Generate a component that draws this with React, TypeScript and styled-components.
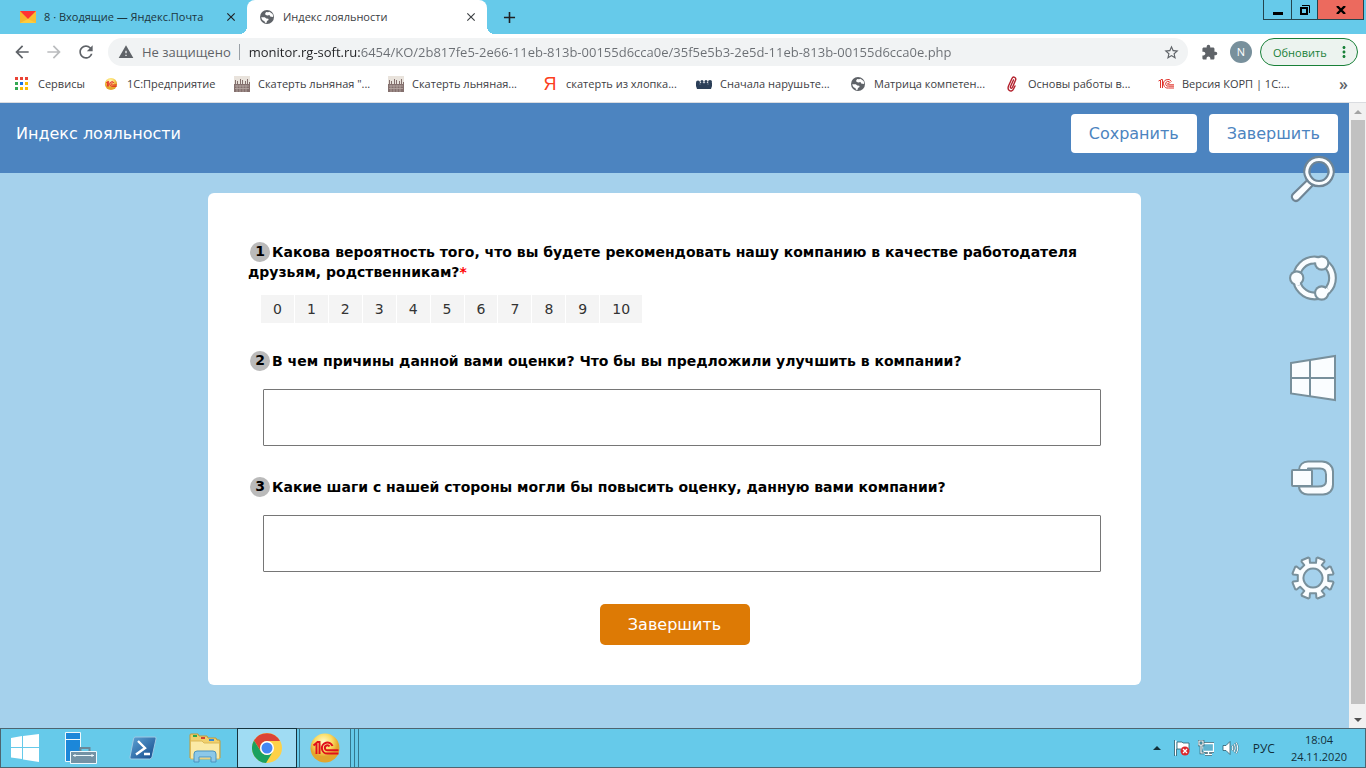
import React from 'react';
import styled, { createGlobalStyle } from 'styled-components';
import { MdClose, MdAdd, MdArrowBack, MdArrowForward, MdRefresh, MdWarning, MdStarBorder, MdExtension, MdMoreVert } from 'react-icons/md';

const UI = '"Open Sans", "Noto Sans", sans-serif';
const BODY = '"DejaVu Sans", Verdana, sans-serif';
const SKY = '#66caea';

const GlobalStyle = createGlobalStyle`
  * { box-sizing: border-box; }
  body { margin: 0; font-family: ${UI}; }
  button, input, textarea { font-family: inherit; margin: 0; }
  button { padding: 0; border: 0; background: none; cursor: pointer; color: inherit; }
  a { color: inherit; text-decoration: none; }
  svg { display: block; flex: none; }
`;

const Desktop = styled.div`
  position: relative;
  display: flex;
  flex-direction: column;
  min-height: 100vh;
`;

/* ---------- Browser chrome ---------- */

const TabStrip = styled.div`
  display: flex;
  align-items: stretch;
  height: 34px;
  background: ${SKY};
  overflow: hidden;
`;

const Tab = styled.div<{ $active?: boolean }>`
  position: relative;
  display: flex;
  align-items: center;
  gap: 8px;
  width: ${p => (p.$active ? 240 : 247)}px;
  padding: 0 8px 0 ${p => (p.$active ? 12 : 20)}px;
  border-radius: 8px 8px 0 0;
  background: ${p => (p.$active ? '#fff' : 'transparent')};
  color: ${p => (p.$active ? '#3c4043' : '#1b353e')};
  ${p => p.$active && `
    &::before, &::after {
      content: '';
      position: absolute;
      bottom: 0;
      width: 8px;
      height: 8px;
    }
    &::before { left: -8px; background: radial-gradient(circle at 0 0, transparent 8px, #fff 8px); }
    &::after { right: -8px; background: radial-gradient(circle at 100% 0, transparent 8px, #fff 8px); }
  `}
`;

const TabTitle = styled.button`
  flex: 1;
  min-width: 0;
  font-size: 11px;
  line-height: 16px;
  text-align: left;
  white-space: nowrap;
`;

const IconButton = styled.button<{ $size?: number; $color?: string }>`
  display: flex;
  align-items: center;
  justify-content: center;
  flex: none;
  width: ${p => p.$size ?? 16}px;
  height: ${p => p.$size ?? 16}px;
  color: ${p => p.$color ?? '#202124'};
`;

const NewTab = styled(IconButton)`
  align-self: center;
  margin-left: 8px;
`;

const WindowButtons = styled.div`
  display: flex;
  align-self: flex-start;
  margin: 0 2px 0 auto;
  height: 20px;
  border: solid #23454f;
  border-width: 0 1px 1px;
`;

const WindowButton = styled.button<{ $width: number; $close?: boolean }>`
  display: flex;
  align-items: center;
  justify-content: center;
  width: ${p => p.$width}px;
  background: ${p => (p.$close ? '#ec6a5e' : 'transparent')};
  & + & { border-left: 1px solid #23454f; }
`;

const Toolbar = styled.div`
  display: flex;
  align-items: center;
  height: 36px;
  padding: 0 8px 0 6px;
  background: #fff;
`;

const Omnibox = styled.form`
  display: flex;
  align-items: center;
  flex: 1;
  min-width: 0;
  height: 28px;
  margin: 0 6px 0 6px;
  padding: 0 9px 0 10px;
  border-radius: 14px;
  background: #f1f3f4;
`;

const Security = styled.button`
  display: flex;
  align-items: center;
  gap: 8px;
  flex: none;
  height: 16px;
  padding-right: 8px;
  border-right: 1px solid #9aa0a6;
  color: #5f6368;
  font-size: 13px;
  line-height: 16px;
`;

const Address = styled.input`
  flex: 1;
  min-width: 0;
  height: 24px;
  padding: 0 0 0 9px;
  border: 0;
  outline: 0;
  font-size: 13px;
  color: #5f6368;
  background: linear-gradient(90deg, #202124 121px, #6a6e73 121px);
  background-clip: text;
  -webkit-background-clip: text;
  -webkit-text-fill-color: transparent;
`;

const Avatar = styled.button`
  width: 22px;
  height: 22px;
  margin: 0 8px 0 6px;
  border-radius: 50%;
  background: #78909c;
  color: #fff;
  font-size: 11px;
  line-height: 22px;
`;

const UpdateButton = styled.button`
  display: flex;
  align-items: center;
  justify-content: space-between;
  width: 98px;
  height: 28px;
  padding: 0 4px 0 12px;
  border: 1px solid #188038;
  border-radius: 14px;
  background: #ecf3ef;
  color: #188038;
  font-size: 11px;
`;

const Bookmarks = styled.nav`
  display: flex;
  align-items: center;
  height: 33px;
  padding: 0 18px 4px 14px;
  border-bottom: 1px solid #dadce0;
  background: #fff;
`;

const Bookmark = styled.a<{ $width: number }>`
  display: flex;
  align-items: center;
  gap: 8px;
  flex: none;
  width: ${p => p.$width}px;
  color: #3c4043;
  font-size: 11px;
  line-height: 16px;
  white-space: nowrap;
`;

const YandexMark = styled.span`
  width: 16px;
  color: #fc3f1d;
  font: 18px/16px "Liberation Sans", sans-serif;
  text-align: center;
`;

const MoreBookmarks = styled.button`
  margin-left: auto;
  color: #5f6368;
  font-size: 16px;
  font-weight: 600;
  line-height: 16px;
`;

/* ---------- Page ---------- */

const Viewport = styled.div`
  display: flex;
  flex: 1;
`;

const Page = styled.main`
  flex: 1;
  min-width: 0;
  background: #a5d1ec;
  font-family: ${BODY};
`;

const Header = styled.header`
  display: flex;
  align-items: flex-start;
  gap: 12px;
  height: 70px;
  padding: 11px 11px 0 16px;
  background: #4c84c0;
`;

const Title = styled.h1`
  flex: 1;
  margin: 10px 0 0;
  color: #fff;
  font-size: 16px;
  font-weight: 400;
  line-height: 20px;
`;

const HeaderButton = styled.button`
  height: 39px;
  padding: 0 18px;
  border-radius: 4px;
  background: #fff;
  color: #4c84c0;
  font-size: 16px;
`;

const Card = styled.form`
  display: flex;
  flex-direction: column;
  max-width: 933px;
  margin: 20px auto 43px;
  padding: 49px 40px 40px;
  border-radius: 6px;
  background: #fff;
`;

const Question = styled.fieldset`
  min-width: 0;
  margin: 0 0 28px;
  padding: 0;
  border: 0;
`;

const OpenQuestion = styled.div`
  margin-bottom: 31px;
`;

const questionText = `
  display: block;
  padding: 0;
  color: #000;
  font-size: 14px;
  font-weight: 700;
  line-height: 20px;
`;

const Legend = styled.legend`${questionText}`;
const Label = styled.label`${questionText}`;

const Badge = styled.span`
  display: inline-block;
  width: 20px;
  height: 20px;
  margin: 0 2px;
  border-radius: 50%;
  background: #bababa;
  line-height: 18px;
  text-align: center;
  vertical-align: top;
`;

const Required = styled.span`
  color: #f00;
`;

const Scale = styled.div`
  display: flex;
  gap: 1px;
  margin: 13px 0 0 13px;
`;

const ScaleItem = styled.label`
  position: relative;
  padding: 0 12px;
  background: #f4f4f4;
  color: #333;
  font-size: 14px;
  line-height: 28px;
  cursor: pointer;
  &:has(:checked) { background: #bababa; }
`;

const ScaleRadio = styled.input`
  position: absolute;
  inset: 0;
  width: 100%;
  height: 100%;
  margin: 0;
  opacity: 0;
`;

const Answer = styled.textarea`
  display: block;
  width: calc(100% - 15px);
  height: 57px;
  margin: 18px 0 0 15px;
  border: 1px solid #767676;
  border-radius: 1px;
  resize: none;
  font-size: 14px;
`;

const Submit = styled.button`
  align-self: center;
  width: 150px;
  height: 41px;
  margin-top: 1px;
  border-radius: 5px;
  background: #dd7a05;
  color: #fff;
  font-size: 16px;
`;

const Scrollbar = styled.div`
  display: flex;
  flex-direction: column;
  width: 17px;
  padding: 0 1px 0 2px;
  background: #f1f1f1;
`;

const ScrollArrow = styled.button`
  display: flex;
  align-items: center;
  justify-content: center;
  height: 17px;
`;

const ScrollTrack = styled.div`
  flex: 1;
  padding-bottom: 7px;
`;

const ScrollThumb = styled.div`
  height: 100%;
  background: #c1c1c1;
`;

/* ---------- Charms, floating over the page ---------- */

const Charms = styled.div`
  position: absolute;
  top: 154px;
  right: 28px;
  display: flex;
  flex-direction: column;
  gap: 50px;
`;

/* ---------- Taskbar ---------- */

const Taskbar = styled.footer`
  display: flex;
  height: 40px;
  border: 1px solid #4d6570;
  background: ${SKY};
`;

const Task = styled.button<{ $width: number; $state?: 'active' | 'running' }>`
  display: flex;
  align-items: center;
  justify-content: center;
  width: ${p => p.$width}px;
  ${p => p.$state === 'active' && 'background: #a0dcf3; border: 1px solid #17333d; margin: -1px 0;'}
  ${p => p.$state === 'running' && 'background: #7ed0ec; border: solid #34788f; border-width: 0 1px; margin-left: 2px;'}
`;

const StackEdge = styled.div`
  width: 4px;
  border-right: 1px solid #34788f;
`;

const Tray = styled.div`
  display: flex;
  align-items: center;
  gap: 8px;
  margin-left: auto;
  padding-right: 18px;
  color: #12303a;
  font-size: 11px;
  line-height: 17px;
`;

const TrayExpand = styled(IconButton)`
  width: 8px;
  margin-right: 5px;
`;

const Language = styled.button`
  margin: 0 8px 0 6px;
  font-size: 12px;
`;

const Clock = styled.time`
  text-align: center;
`;

/* ---------- Drawings ---------- */

const Globe = () => (
  <svg width="16" height="16" viewBox="0 0 16 16">
    <circle cx="8" cy="8" r="7" fill="#5f6368" />
    <path d="M10.500 2.700 9 3.200 7.300 3 6.200 4.200l.2 1.600 1.800.6 2.300-.3.700 1.400 2.500.4.500-.6-.6-2.300z" fill="#fff" />
    <path d="M2.200 8.200l3.600.1 1.500 1.300 2 .2.300 1.300-1.600.9-.6 1.900-1.300-.1-.8-1.700-1.400-.7-1-1.200z" fill="#fff" />
  </svg>
);

const Mail = () => (
  <svg width="16" height="12" viewBox="0 0 16 12">
    <path d="M0 0h16v12H0z" fill="#ffcc3d" />
    <path d="m0 0 8 8-8 4z" fill="#f5b52e" />
    <path d="M16 0 8 8l8 4z" fill="#f9bd33" />
    <path d="M0 0h16L8 8z" fill="#f33" />
  </svg>
);

const Apps = () => {
  const colors = ['#ea4335', '#ea4335', '#ea4335', '#34a853', '#1a73e8', '#fbbc04', '#34a853', '#fbbc04', '#fbbc04'];
  return (
    <svg width="16" height="16" viewBox="0 0 16 16">
      {colors.map((c, i) => <rect key={i} x={1 + (i % 3) * 5} y={1 + Math.floor(i / 3) * 5} width="3" height="3" fill={c} />)}
    </svg>
  );
};

const OneC = ({ size, pad = 0 }: { size: number; pad?: number }) => (
  <svg width={size} height={size} viewBox={`${-pad} ${-pad} ${32 + 2 * pad} ${32 + 2 * pad}`}>
    <defs>
      <radialGradient id="gold" cx="45%" cy="30%">
        <stop offset="0" stopColor="#fffbd0" />
        <stop offset=".6" stopColor="#fbdc62" />
        <stop offset="1" stopColor="#e3a52c" />
      </radialGradient>
    </defs>
    <circle cx="16" cy="16" r="14.500" fill="url(#gold)" />
    <g fill="none" stroke="#e0101b" strokeWidth="2">
      <path d="M4.500 13.500 7.500 11v11M10.500 22V10H8" />
      <path d="M23.500 14A5.500 5.500 0 1 0 18.500 21.500h11M20.500 14.500A2.500 2.500 0 1 0 18.500 18.300h11" />
    </g>
  </svg>
);

const OneCFlat = () => (
  <svg width="16" height="16" viewBox="0 0 16 16" fill="none" stroke="#e0342c" strokeWidth="1">
    <path d="M.5 5 2.500 4v8M4.500 12V3.500H3M13.500 5.500A4.300 4.300 0 1 0 10.500 12H16M12.300 7A2.400 2.400 0 1 0 10.500 10.200H16M11.200 8a.8.8 0 1 0-.7 .8H16" />
  </svg>
);

const Skyline = () => (
  <svg width="16" height="16" viewBox="0 0 16 16">
    <path d="M0 0h16v16H0z" fill="#e9e3dc" />
    <path d="M0 8h1V4h1v4h1V5h1v3h2V3h1v5h1V4h1v4h2V5h1v3h1V3h1v5h1V6h1v10H0z" fill="#84706e" />
    <path d="M1 10h14M1 12.500h14M3 9v7M6 9v7M9 9v7M12 9v7" stroke="#b8a9a5" strokeWidth=".8" />
  </svg>
);

const Crowd = () => (
  <svg width="16" height="16" viewBox="0 0 16 16" fill="#2b3f58">
    <path d="M0 7h16v3l-1 3H1l-1-3z" />
    <circle cx="2" cy="6.500" r="2" /><circle cx="6" cy="5.500" r="1.500" /><circle cx="10" cy="5.500" r="1.500" /><circle cx="14" cy="6" r="2" />
    <path d="M4 7v2M8 6v2M12 7v2" stroke="#8494a8" strokeWidth=".6" />
  </svg>
);

const Clip = () => (
  <svg width="16" height="16" viewBox="0 0 16 16" fill="none" stroke="#b3202c" strokeWidth="1.400" strokeLinecap="round">
    <path d="m9.500 4-3 6.500c-.6 1.700 1.300 2.300 2 .8l3-7c1.200-3-2.300-4.500-3.700-1.600L4.500 10c-1.700 4.500 3 7 5 3l1.500-3" />
  </svg>
);

const charm = { width: 50, height: 50, viewBox: '0 0 50 50', fill: '#fafdff', stroke: '#78909c', strokeWidth: 2.2, strokeLinejoin: 'round' as const };

const SearchCharm = () => (
  <svg {...charm} stroke="#6f8595">
    <path d="M21.500 24 5 40c-3.500 3.800 2 9.500 6 5.500L27 29z" />
    <path fillRule="evenodd" d="M31 2.800a14.700 14.700 0 1 0 .01 0zm0 5.200a9.500 9.500 0 1 1-.01 0z" />
  </svg>
);

const shareNodes = [[33.7, 9], [8.7, 24], [33.7, 39]];

const ShareCharm = () => (
  <svg {...charm} fill="none" stroke="#fafdff" strokeWidth={4.6} strokeLinejoin="round">
    <circle cx="26.500" cy="24" r="18" stroke="#78909c" strokeWidth="8.800" />
    <circle cx="26.500" cy="24" r="18" />
    {shareNodes.map(([x, y]) => <circle key={`${x}-${y}`} cx={x} cy={y} r="7.700" fill="#78909c" stroke="none" />)}
    {shareNodes.map(([x, y]) => <circle key={`${x}-${y}`} cx={x} cy={y} r="5.600" fill="#fafdff" stroke="none" />)}
    <path d="M33 7.500A18 18 0 0 0 23 6.300M8.500 24A18 18 0 0 0 10.200 31.500M34 40.300A18 18 0 0 0 40.500 35.300" />
  </svg>
);

const StartCharm = () => (
  <svg {...charm} strokeWidth={2} strokeLinejoin="miter">
    <path d="M3 9 47 2v44L3 39.500z" />
    <path d="M22 6v36M3 24h44" />
  </svg>
);

const DevicesCharm = () => (
  <svg {...charm} viewBox="0 1 50 50" strokeWidth={2}>
    <path d="M11 17c0-5 4-8.500 9-8.500h14c6 0 11 4.500 11 10v13c0 6-4 10-10 10H20c-5 0-9-3-9-8h19c5 0 8-1 8-5v-7c0-4-2-6-6-6H20v2z" />
    <rect x="4" y="17" width="20" height="16" rx="1" />
  </svg>
);

const gearPath = (() => {
  const points: string[] = [];
  for (let i = 0; i < 8; i++) {
    const mid = (i * 45 + 22.5) * Math.PI / 180;
    [[-0.2, 15.5], [-0.22, 20], [-0.17, 21], [0.17, 21], [0.22, 20], [0.2, 15.5]].forEach(([da, r]) => {
      points.push(`${(25 + r * Math.cos(mid + da)).toFixed(1)} ${(25 + r * Math.sin(mid + da)).toFixed(1)}`);
    });
  }
  return `M${points.join('L')}ZM25 15.500a9.500 9.500 0 1 0 .01 0z`;
})();

const SettingsCharm = () => (
  <svg {...charm} viewBox="0 1 50 50" strokeWidth={2}><path fillRule="evenodd" d={gearPath} /></svg>
);

const StartIcon = () => (
  <svg width="28" height="28" viewBox="0 0 28 28" fill="#fff">
    <path d="m0 4 11-2v11H0zM12 2l16-2v13H12zM0 14h11v11L0 23.500zM12 14h16v14l-16-2.500z" />
  </svg>
);

const ServerIcon = () => (
  <svg width="32" height="32" viewBox="0 0 32 32" stroke="#eef8fc" strokeWidth="1">
    <path d="M.5.500h15v29h-15z" fill="#1c87d9" />
    <path d="M.5 7.500h15" />
    <path d="M15.500 19v-3h9v3" fill="none" stroke="#6a8798" strokeWidth="2" />
    <path d="M5.500 19.500h26v12h-26z" fill="#7492a5" />
    <path d="M8 23.500h21M10 22v3M27 22v3" />
  </svg>
);

const ShellIcon = () => (
  <svg width="28" height="24" viewBox="0 0 28 24">
    <defs><linearGradient id="ps" x2="1" y2="1"><stop stopColor="#5fa4d6" /><stop offset="1" stopColor="#12488a" /></linearGradient></defs>
    <path d="M6 1h20q1.500 0 1 2l-4 18q-.5 2-2.500 2H2q-1.500 0-1-2L4.500 3Q5 1 6 1z" fill="url(#ps)" stroke="#9fc9e4" />
    <path d="m9 5 7 7-9 6.500M15 18h6" fill="none" stroke="#fff" strokeWidth="2.400" />
  </svg>
);

const FolderIcon = () => (
  <svg width="32" height="30" viewBox="0 0 32 30">
    <path d="M1 2q0-1 1-1h7l1 2h8l1 2h8l1 2h2q1 0 1 1v17H1z" fill="#f0d06d" stroke="#c39a36" />
    <path d="M4 2h4v2H4z" fill="#2ba84a" /><path d="M12 4h4v2h-4z" fill="#d3432f" /><path d="M20 6h5v2h-5z" fill="#3389d6" />
    <path d="M1.500 8H13l2 2h15.500v15q0 1-1 1h-27q-1 0-1-1z" fill="#fbeaa6" stroke="#dcb958" />
    <path d="M5 29v-8q0-3 3-3h16q3 0 3 3v8h-5v-5H10v5z" fill="#8cc8e8" stroke="#4a93bf" />
  </svg>
);

const ChromeIcon = () => (
  <svg width="30" height="30" viewBox="0 0 30 30">
    <circle cx="15" cy="15" r="15" fill="#fdd148" />
    <path d="M2 7.500A15 15 0 0 1 28 8H15a7 7 0 0 0-6 10.500z" fill="#dc4436" />
    <path d="M2 7.500A15 15 0 0 0 14 30l7-11.500a7 7 0 0 1-12.100 0z" fill="#1aa15f" />
    <circle cx="15" cy="15" r="7" fill="#fff" /><circle cx="15" cy="15" r="5.500" fill="#4587f3" />
  </svg>
);

const FlagIcon = () => (
  <svg width="16" height="16" viewBox="0 0 16 16">
    <path d="M1.500.500v15" stroke="#fff" strokeWidth="2" />
    <path d="M.5 0v16M2.500 9v7" stroke="#2b5b6b" strokeWidth=".8" />
    <path d="M3 2h5l1 1h6v7H8L7 9H3z" fill="#fff" stroke="#2b5b6b" strokeWidth=".8" />
    <circle cx="11" cy="11" r="4.500" fill="#dc2a2e" />
    <path d="m9 9 4 4m0-4-4 4" stroke="#fff" strokeWidth="1.300" />
  </svg>
);

const NetworkIcon = () => (
  <svg width="16" height="16" viewBox="0 0 16 16">
    <path d="M4.500 3.500h11v8h-11zM7 14.500h7M10.500 11v3" fill="none" stroke="#2b5b6b" strokeWidth="3" />
    <path d="M4.500 3.500h11v8h-11zM7 14.500h7M10.500 11v3" fill="#5fb3cf" stroke="#fff" strokeWidth="1.300" />
    <path d="M1 1h4v4H1zM3 5v8h3" fill="#5fb3cf" stroke="#2b5b6b" strokeWidth="2.600" />
    <path d="M1 1h4v4H1zM3 5v8h3" fill="none" stroke="#fff" strokeWidth="1.200" />
  </svg>
);

const SoundIcon = () => (
  <svg width="17" height="16" viewBox="0 0 17 16">
    <path d="M1 5.500h3l4-4v13l-4-4H1z" fill="#fff" stroke="#2b5b6b" strokeWidth=".8" />
    <path d="M10 5.500q1.500 2.500 0 5M12 4q2.500 4 0 8M14 2.500q3.500 5.500 0 11" fill="none" stroke="#2b5b6b" strokeWidth="1.800" />
    <path d="M10 5.500q1.500 2.500 0 5M12 4q2.500 4 0 8M14 2.500q3.500 5.500 0 11" fill="none" stroke="#f4fbfe" strokeWidth="1.100" />
  </svg>
);

const Triangle = ({ down, color = '#505050' }: { down?: boolean; color?: string }) => (
  <svg width="8" height="4" viewBox="0 0 8 4"><path d={down ? 'M0 0h8L4 4z' : 'M0 4h8L4 0z'} fill={color} /></svg>
);

/* ---------- Data ---------- */

const bookmarks = [
  { text: 'Сервисы', width: 89, icon: <Apps /> },
  { text: '1С:Предприятие', width: 131, icon: <OneC size={16} pad={3} /> },
  { text: 'Скатерть льняная "...', width: 154, icon: <Skyline /> },
  { text: 'Скатерть льняная...', width: 154, icon: <Skyline /> },
  { text: 'скатерть из хлопка...', width: 154, icon: <YandexMark>Я</YandexMark> },
  { text: 'Сначала нарушьте...', width: 154, icon: <Crowd /> },
  { text: 'Матрица компетен...', width: 154, icon: <Globe /> },
  { text: 'Основы работы в...', width: 154, icon: <Clip /> },
  { text: 'Версия КОРП | 1С:...', width: 154, icon: <OneCFlat /> },
];

const openQuestions = [
  { n: 2, text: 'В чем причины данной вами оценки? Что бы вы предложили улучшить в компании?' },
  { n: 3, text: 'Какие шаги с нашей стороны могли бы повысить оценку, данную вами компании?' },
];

export default function App() {
  return (
    <Desktop>
      <GlobalStyle />
      <TabStrip>
        <Tab>
          <Mail />
          <TabTitle>8 · Входящие — Яндекс.Почта</TabTitle>
          <IconButton aria-label="Закрыть вкладку"><MdClose size={14} stroke="currentColor" /></IconButton>
        </Tab>
        <Tab $active>
          <Globe />
          <TabTitle>Индекс лояльности</TabTitle>
          <IconButton aria-label="Закрыть вкладку" $color="#3c4043"><MdClose size={14} stroke="currentColor" /></IconButton>
        </Tab>
        <NewTab aria-label="Новая вкладка" $size={28}><MdAdd size={19} stroke="currentColor" /></NewTab>
        <WindowButtons>
          <WindowButton $width={27} aria-label="Свернуть">
            <svg width="10" height="11"><path d="M0 8h10v3H0z" /></svg>
          </WindowButton>
          <WindowButton $width={26} aria-label="Восстановить">
            <svg width="10" height="10" fill="none" stroke="#000"><path d="M1 3h6v6H1z" strokeWidth="2" /><path d="M2 .5h7.500V8" /></svg>
          </WindowButton>
          <WindowButton $width={46} $close aria-label="Закрыть">
            <svg width="10" height="8" stroke="#000" strokeWidth="2.400"><path d="m1 0 8 8M9 0 1 8" /></svg>
          </WindowButton>
        </WindowButtons>
      </TabStrip>

      <Toolbar>
        <IconButton $size={32} $color="#5f6368" aria-label="Назад"><MdArrowBack size={20} /></IconButton>
        <IconButton $size={32} $color="#babcbe" aria-label="Вперёд"><MdArrowForward size={20} /></IconButton>
        <IconButton $size={32} $color="#5f6368" aria-label="Обновить страницу"><MdRefresh size={20} /></IconButton>
        <Omnibox onSubmit={e => e.preventDefault()}>
          <Security type="button"><MdWarning size={16} />Не защищено</Security>
          <Address aria-label="Адрес" defaultValue="monitor.rg-soft.ru:6454/KO/2b817fe5-2e66-11eb-813b-00155d6cca0e/35f5e5b3-2e5d-11eb-813b-00155d6cca0e.php" />
          <IconButton type="button" $color="#5f6368" aria-label="Добавить в закладки"><MdStarBorder size={17} /></IconButton>
        </Omnibox>
        <IconButton $size={30} $color="#5f6368" aria-label="Расширения"><MdExtension size={17} /></IconButton>
        <Avatar>N</Avatar>
        <UpdateButton>Обновить<MdMoreVert size={18} /></UpdateButton>
      </Toolbar>

      <Bookmarks>
        {bookmarks.map(b => (
          <Bookmark key={b.text} href="#" $width={b.width}>{b.icon}{b.text}</Bookmark>
        ))}
        <MoreBookmarks aria-label="Другие закладки">»</MoreBookmarks>
      </Bookmarks>

      <Viewport>
        <Page>
          <Header>
            <Title>Индекс лояльности</Title>
            <HeaderButton>Сохранить</HeaderButton>
            <HeaderButton>Завершить</HeaderButton>
          </Header>
          <Card onSubmit={e => e.preventDefault()}>
            <Question>
              <Legend>
                <Badge>1</Badge>Какова вероятность того, что вы будете рекомендовать нашу компанию в качестве работодателя друзьям, родственникам?<Required>*</Required>
              </Legend>
              <Scale>
                {Array.from({ length: 11 }, (_, i) => (
                  <ScaleItem key={i}><ScaleRadio type="radio" name="score" value={i} />{i}</ScaleItem>
                ))}
              </Scale>
            </Question>
            {openQuestions.map(q => (
              <OpenQuestion key={q.n}>
                <Label htmlFor={`q${q.n}`}><Badge>{q.n}</Badge>{q.text}</Label>
                <Answer id={`q${q.n}`} />
              </OpenQuestion>
            ))}
            <Submit type="submit">Завершить</Submit>
          </Card>
        </Page>
        <Scrollbar>
          <ScrollArrow aria-label="Вверх"><Triangle color="#a3a3a3" /></ScrollArrow>
          <ScrollTrack><ScrollThumb /></ScrollTrack>
          <ScrollArrow aria-label="Вниз"><Triangle down /></ScrollArrow>
        </Scrollbar>
      </Viewport>

      <Charms>
        <button aria-label="Поиск"><SearchCharm /></button>
        <button aria-label="Общий доступ"><ShareCharm /></button>
        <button aria-label="Пуск"><StartCharm /></button>
        <button aria-label="Устройства"><DevicesCharm /></button>
        <button aria-label="Параметры"><SettingsCharm /></button>
      </Charms>

      <Taskbar>
        <Task $width={48} aria-label="Пуск"><StartIcon /></Task>
        <Task $width={64} aria-label="Диспетчер серверов"><ServerIcon /></Task>
        <Task $width={60} aria-label="PowerShell"><ShellIcon /></Task>
        <Task $width={64} aria-label="Проводник"><FolderIcon /></Task>
        <Task $width={60} $state="active" aria-label="Chrome"><ChromeIcon /></Task>
        <Task $width={52} $state="running" aria-label="1С"><OneC size={32} /></Task>
        <StackEdge /><StackEdge />
        <Tray>
          <TrayExpand aria-label="Скрытые значки"><Triangle color="#12303a" /></TrayExpand>
          <FlagIcon />
          <NetworkIcon />
          <SoundIcon />
          <Language>РУС</Language>
          <Clock>18:04<br />24.11.2020</Clock>
        </Tray>
      </Taskbar>
    </Desktop>
  );
}
